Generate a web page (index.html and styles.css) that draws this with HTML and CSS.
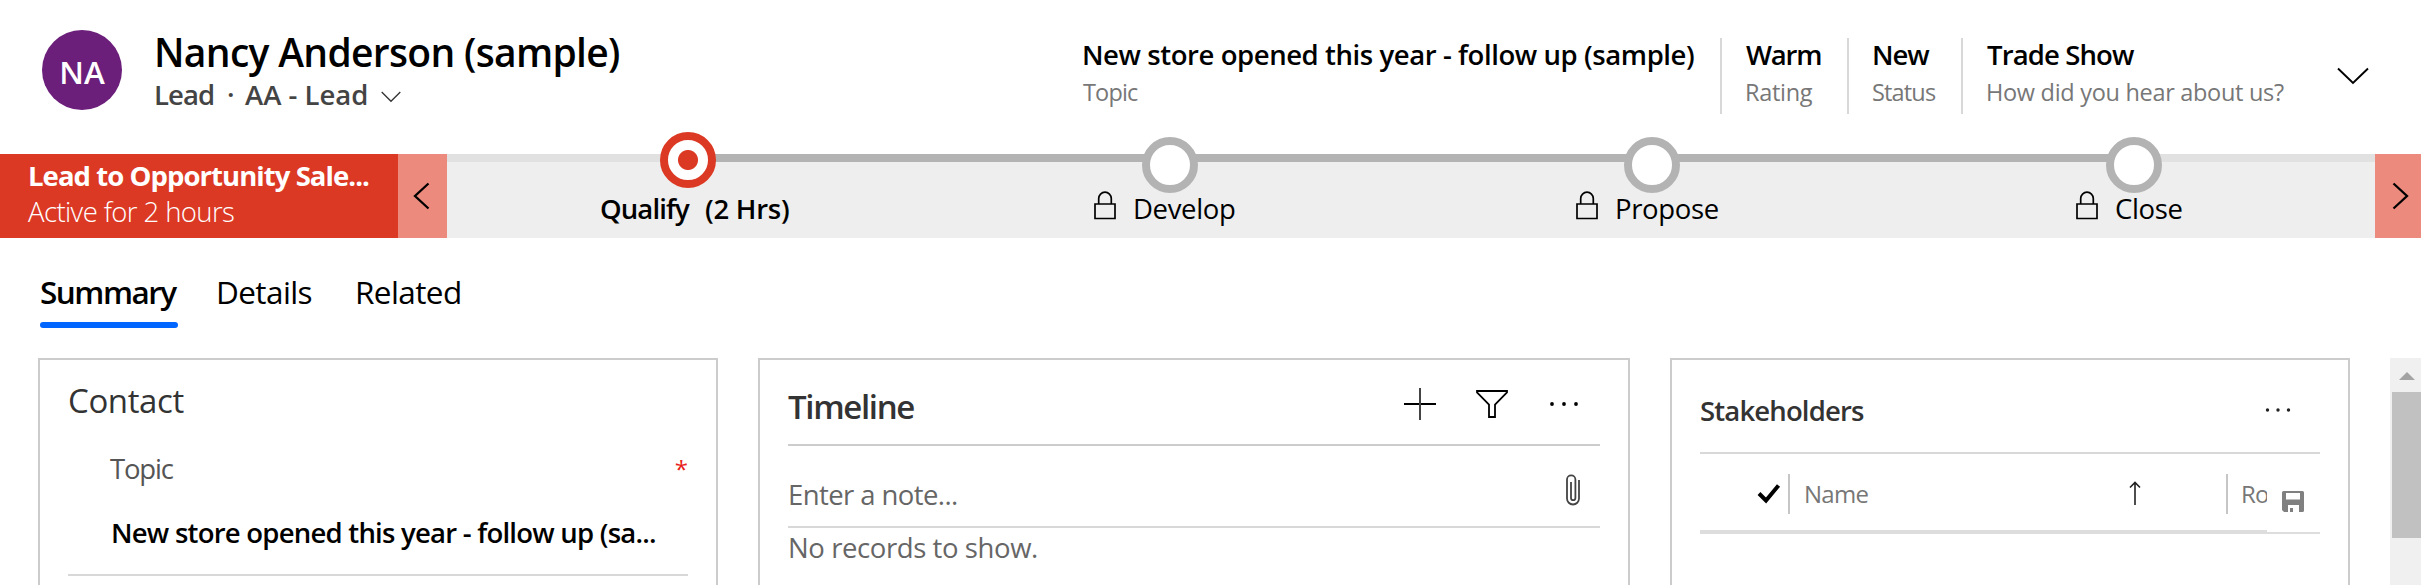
FILE: index.html
```html
<!DOCTYPE html>
<html lang="en">
<head>
<meta charset="utf-8">
<title>Lead: Nancy Anderson (sample)</title>
<link rel="stylesheet" href="styles.css">
</head>
<body>
<header class="record">
  <div class="avatar">NA</div>
  <div class="identity">
    <h1 class="name">Nancy Anderson (sample)</h1>
    <div class="form-name">
      <span class="entity">Lead</span><span class="dot">·</span><span class="form">AA - Lead</span>
      <svg class="form-chevron" width="20" height="12" viewBox="0 0 20 12"><path d="M.7 1 10 10.3 19.3 1" fill="none" stroke="#333" stroke-width="1.3"/></svg>
    </div>
  </div>
  <div class="facts">
    <div class="fact"><b class="fact-value v-topic">New store opened this year - follow up (sample)</b><span class="fact-label l-topic">Topic</span></div>
    <div class="fact"><b class="fact-value v-warm">Warm</b><span class="fact-label">Rating</span></div>
    <div class="fact"><b class="fact-value v-new">New</b><span class="fact-label l-status">Status</span></div>
    <div class="fact"><b class="fact-value v-show">Trade Show</b><span class="fact-label">How did you hear about us?</span></div>
  </div>
  <svg class="facts-chevron" width="32" height="18" viewBox="0 0 32 18"><path d="M1 1.500 16 16 31 1.500" fill="none" stroke="#000" stroke-width="1.900"/></svg>
</header>

<section class="process">
  <div class="process-name">
    <div class="process-title">Lead to Opportunity Sale...</div>
    <div class="process-age">Active for 2 hours</div>
  </div>
  <div class="step prev"><svg width="17" height="28" viewBox="0 0 17 28"><path d="M15.500 1.500 2 14 15.500 26.500" fill="none" stroke="#000" stroke-width="2.300"/></svg></div>
  <div class="stages">
    <div class="stage active">
      <div class="track"><i></i><i class="done"></i></div>
      <div class="node"></div>
      <div class="stage-label s-qualify"><span class="qualify">Qualify</span><span class="hrs">(2 Hrs)</span></div>
    </div>
    <div class="stage">
      <div class="track"><i class="done"></i><i class="done"></i></div>
      <div class="node"></div>
      <div class="stage-label s-develop"><svg class="lock" width="22" height="29" viewBox="0 0 22 29"><path d="M1 13H21V27.500H1ZM4.700 13V7.500a6.300 6.300 0 0 1 12.600 0V13" fill="none" stroke="#000" stroke-width="1.700"/></svg><span>Develop</span></div>
    </div>
    <div class="stage">
      <div class="track"><i class="done"></i><i class="done"></i></div>
      <div class="node"></div>
      <div class="stage-label s-propose"><svg class="lock" width="22" height="29" viewBox="0 0 22 29"><path d="M1 13H21V27.500H1ZM4.700 13V7.500a6.300 6.300 0 0 1 12.600 0V13" fill="none" stroke="#000" stroke-width="1.700"/></svg><span>Propose</span></div>
    </div>
    <div class="stage">
      <div class="track"><i class="done"></i><i></i></div>
      <div class="node"></div>
      <div class="stage-label s-close"><svg class="lock" width="22" height="29" viewBox="0 0 22 29"><path d="M1 13H21V27.500H1ZM4.700 13V7.500a6.300 6.300 0 0 1 12.600 0V13" fill="none" stroke="#000" stroke-width="1.700"/></svg><span>Close</span></div>
    </div>
  </div>
  <div class="step next"><svg width="17" height="28" viewBox="0 0 17 28"><path d="M1.500 1.500 15 14 1.500 26.500" fill="none" stroke="#000" stroke-width="2.300"/></svg></div>
</section>

<nav class="tabs">
  <a class="tab current">Summary</a>
  <a class="tab details">Details</a>
  <a class="tab related">Related</a>
</nav>

<main class="columns">
  <section class="card contact">
    <h2 class="contact-title">Contact</h2>
    <div class="field-label"><span>Topic</span><span class="required">*</span></div>
    <div class="field-value">New store opened this year - follow up (sa...</div>
  </section>

  <section class="card timeline">
    <div class="timeline-head">
      <h2 class="timeline-title">Timeline</h2>
      <div class="tools">
        <svg width="32" height="32" viewBox="0 0 32 32"><path d="M0 16H32" stroke="#000" stroke-width="2"/><path d="M16 0V32" stroke="#444" stroke-width="2"/></svg>
        <svg width="32" height="32" viewBox="0 0 32 32"><path d="M1 3H31V4.500L19 16.500V29H13V16.500L1 4.500Z" fill="none" stroke="#000" stroke-width="1.800"/></svg>
        <svg width="32" height="32" viewBox="0 0 32 32"><circle cx="4" cy="16" r="1.900"/><circle cx="16" cy="16" r="1.900"/><circle cx="28" cy="16" r="1.900"/></svg>
      </div>
    </div>
    <div class="note">
      <span class="note-hint">Enter a note...</span>
      <svg class="clip" width="16" height="32" viewBox="0 0 16 32"><path d="M14 6V24.500a6 6 0 0 1-12 0V5.500a4.200 4.200 0 0 1 8.400 0V24a2.200 2.200 0 0 1-4.400 0V8" fill="none" stroke="#444" stroke-width="1.800"/></svg>
    </div>
    <p class="empty">No records to show.</p>
  </section>

  <section class="card stakeholders">
    <div class="stake-head">
      <h2 class="stake-title">Stakeholders</h2>
      <svg class="stake-more" width="26" height="8" viewBox="0 0 26 8" fill="#222"><circle cx="2.500" cy="4" r="1.700"/><circle cx="13" cy="4" r="1.700"/><circle cx="23.500" cy="4" r="1.700"/></svg>
    </div>
    <div class="grid-head">
      <div class="grid-cols">
        <div class="col-check"><svg width="24" height="20" viewBox="0 0 24 20"><path d="M2 9.500 9 16.500 21.500 1.500" fill="none" stroke="#000" stroke-width="4"/></svg></div>
        <div class="col-name"><span class="name-head">Name</span><svg width="12" height="24" viewBox="0 0 12 24"><path d="M6 24V1.500M1 6.500 6 1.500 11 6.500" fill="none" stroke="#222" stroke-width="1.600"/></svg></div>
        <div class="col-role">Ro</div>
      </div>
      <svg class="save" width="22" height="21" viewBox="0 0 22 21"><path fill="#808080" fill-rule="evenodd" d="M1.500 0H20.500Q22 0 22 1.500V19.500Q22 21 20.500 21H17V14H6V21H2L0 19V1.500Q0 0 1.500 0ZM4 2V8.500H18V2ZM8 17H11V21H8Z"/></svg>
    </div>
  </section>

  <div class="scrollbar">
    <svg class="scroll-up" width="16" height="8" viewBox="0 0 16 8"><path d="M8 0 16 8H0Z" fill="#a3a3a3"/></svg>
    <div class="thumb"></div>
  </div>
</main>
</body>
</html>
```
FILE: styles.css
```css
* { box-sizing: border-box; margin: 0; }
body {
  width: 2421px;
  height: 585px;
  overflow: hidden;
  background: #fff;
  color: #000;
  font: 400 27.5px/36px "Open Sans", "Noto Sans", sans-serif;
  white-space: nowrap;
}
svg { display: block; flex: none; }
h1, h2, b { font-weight: 600; }

/* Record header */
.record { display: flex; height: 154px; }
.avatar {
  width: 80px;
  height: 80px;
  margin: 30px 0 0 42px;
  border-radius: 50%;
  background: #6b1e7a;
  color: #fff;
  font-size: 31.5px;
  font-weight: 600;
  line-height: 83px;
  text-align: center;
}
.identity { width: 960px; padding: 28px 0 0 32px; }
.name { font-size: 39px; line-height: 48px; letter-spacing: -.68px; }
.form-name { display: flex; margin-top: 1px; color: #444; font-weight: 600; }
.entity { width: 73px; letter-spacing: -.9px; }
.dot { width: 18px; }
.form-chevron { margin: 14px 0 0 12px; }
.form { width: 124px; }

.facts {
  display: grid;
  grid-template-columns: 640px 127px 114px 374px;
  height: 76px;
  margin-top: 38px;
}
.fact { padding-left: 23px; border-right: 2px solid #d8d8d8; }
.fact:first-child { padding-left: 0; }
.fact:last-child { border-right: 0; }
.fact-value { display: block; margin-top: -1px; letter-spacing: -.42px; }
.v-warm { letter-spacing: -1.2px; margin-left: 1px; }
.v-new { letter-spacing: -1.1px; }
.v-show { letter-spacing: -.87px; margin-left: 1px; }
.fact-label {
  display: block;
  margin-top: 4px;
  color: #777;
  font-size: 23.5px;
  line-height: 30px;
  letter-spacing: -.3px;
}
.l-topic, .l-status { letter-spacing: -.84px; }
.l-topic { margin-left: 1px; }
.facts-chevron { margin-top: 67px; }

/* Business process bar */
.process { display: flex; height: 84px; }
.process-name { width: 398px; padding: 4px 0 0 28px; background: #dc3924; color: #fff; }
.process-title { font-weight: 700; letter-spacing: -.94px; }
.process-age { font-weight: 300; letter-spacing: -.6px; }
.step { background: #eb8a7d; padding-top: 28px; }
.prev { width: 49px; padding-left: 15px; }
.next { width: 46px; padding-left: 17px; }
.stages { display: flex; background: #eee; }
.stage { width: 482px; }
.track { display: flex; height: 8px; }
.track i { flex: 1; background: #e1e1e1; }
.track .done { background: #b3b3b3; }
.node {
  position: relative;
  width: 56px;
  height: 56px;
  margin: -25px auto 0;
  border: 8px solid #b3b3b3;
  border-radius: 50%;
  background: #fff;
}
.active .node {
  margin-top: -30px;
  margin-bottom: 5px;
  border-color: #dc3924;
  background: radial-gradient(circle, #dc3924 9.5px, #fff 10.5px);
}
.stage-label { display: flex; margin-top: -2px; letter-spacing: -.35px; }
.s-qualify { padding-left: 153px; font-weight: 600; }
.s-develop { padding-left: 165px; }
.s-propose { padding-left: 165px; }
.s-close { padding-left: 183px; }
.qualify { width: 105px; letter-spacing: -.89px; }
.hrs { letter-spacing: -.25px; }
.lock { margin: 0 17px 0 0; }

/* Tabs */
.tabs { display: flex; height: 120px; padding: 33px 0 0 40px; font-size: 31.5px; line-height: 42px; }
.tab { height: 57px; margin-right: 38px; letter-spacing: -.6px; }
.current { width: 138px; font-weight: 600; letter-spacing: -1.5px; }
.current::after { content: ""; display: block; height: 6px; margin-top: 9px; border-radius: 3px; background: #06f; }
.details { width: 101px; }

/* Form columns */
.columns { display: flex; height: 227px; padding-left: 38px; }
.card { border: 2px solid #ccc; border-bottom: 0; }
.contact { width: 680px; margin-right: 40px; padding: 19px 28px 0; }
.contact-title { color: #333; font-weight: 400; font-size: 33px; line-height: 44px; letter-spacing: -.4px; }
.field-label { display: flex; justify-content: space-between; margin-top: 28px; padding-left: 42px; color: #555; letter-spacing: -1.2px; }
.required { color: #e8221b; font-size: 24px; letter-spacing: 0; }
.field-value { padding: 28px 0 23px 43px; border-bottom: 2px solid #d8d8d8; font-weight: 600; letter-spacing: -.76px; }

.timeline { width: 872px; margin-right: 40px; padding: 0 28px; }
.timeline-head { display: flex; justify-content: space-between; height: 86px; border-bottom: 2px solid #ccc; }
.timeline-title { margin-top: 25px; color: #333; font-size: 33px; line-height: 44px; letter-spacing: -1.35px; }
.tools { display: flex; gap: 40px; margin: 28px 20px 0 0; }
.note { display: flex; justify-content: space-between; height: 82px; border-bottom: 2px solid #d8d8d8; }
.note-hint { margin: 31px 0 0; color: #666; letter-spacing: -.59px; }
.clip { margin: 28px 19px 0 0; }
.empty { margin: 2px 0 0; color: #666; letter-spacing: -.41px; }

.stakeholders { width: 680px; margin-right: 40px; padding: 0 28px; }
.stake-head { display: flex; justify-content: space-between; height: 94px; border-bottom: 2px solid #d8d8d8; }
.stake-title { margin-top: 33px; color: #333; font-size: 27.5px; letter-spacing: -.85px; }
.stake-more { margin: 46px 29px 0 0; }
.grid-head { display: flex; height: 80px; border-bottom: 2px solid #ddd; }
.grid-cols {
  display: flex;
  width: 567px;
  overflow: hidden;
  padding-top: 20px;
  border-bottom: 2px solid #ddd;
  color: #777;
  font-size: 24px;
  line-height: 40px;
  letter-spacing: -.7px;
}
.grid-cols > div { height: 40px; flex: none; }
.col-check { width: 90px; padding: 10px 0 0 57px; border-right: 2px solid #c6c6c6; }
.col-name { display: flex; justify-content: space-between; width: 438px; padding: 0 85px 0 14px; border-right: 2px solid #c6c6c6; }
.col-name svg { margin-top: 7px; }
.col-role { padding-left: 13px; }
.save { margin: 37px 0 0 15px; }

.scrollbar { width: 31px; padding-left: 2px; background: #f0f0f0; }
.scroll-up { margin: 14px 0 12px 7px; }
.thumb { height: 146px; background: #c1c1c1; }
```
